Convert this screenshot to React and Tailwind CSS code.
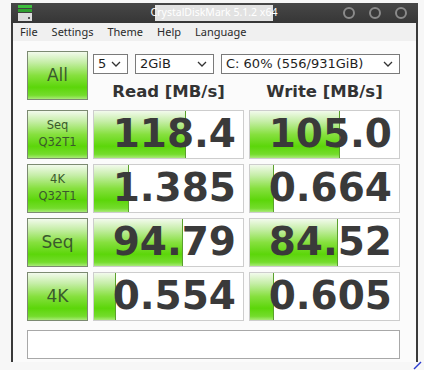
const rows = [
  { label: ["Seq", "Q32T1"], read: "118.4", readBar: 92, write: "105.0", writeBar: 90 },
  { label: ["4K", "Q32T1"], read: "1.385", readBar: 35, write: "0.664", writeBar: 24 },
  { label: ["Seq"], read: "94.79", readBar: 89, write: "84.52", writeBar: 88 },
  { label: ["4K"], read: "0.554", readBar: 22, write: "0.605", writeBar: 24 },
];

const green =
  "bg-[linear-gradient(to_bottom,#f2faec_0%,#c6eea8_22%,#86e03e_50%,#5cd60a_75%,#74dc2c_92%,#a8ea78_100%)]";

function Chevron() {
  return (
    <svg width="10" height="6" viewBox="0 0 10 6" className="shrink-0">
      <polyline points="1,1 5,5 9,1" fill="none" stroke="#333" strokeWidth="1.3" />
    </svg>
  );
}

function Select({ value, className }) {
  return (
    <div className={`h-[20px] border border-[#7a7a7a] bg-white flex items-center justify-between pl-[4px] pr-[6px] text-[13px] text-[#1e1e1e] ${className}`}>
      <span>{value}</span>
      <Chevron />
    </div>
  );
}

function TestButton({ lines, big }) {
  return (
    <div className={`h-[49px] border border-[#7c8a72] ${green} flex flex-col items-center justify-center text-[#3a5a2c] leading-[17px] ${big ? "text-[17px]" : "text-[11.5px]"}`}>
      {lines.map((l) => (
        <span key={l}>{l}</span>
      ))}
    </div>
  );
}

function Cell({ value, bar }) {
  return (
    <div className="relative h-[49px] border border-[#cdcdcd] bg-white overflow-hidden">
      <div className={`absolute left-0 top-0 bottom-0 ${green} border-r border-[#5aa02c]`} style={{ width: bar }} />
      <div className="relative h-full flex items-center justify-end pr-[7px] font-bold text-[39px] text-[#3a3a3a] tracking-[0px]" style={{ fontFamily: '"DejaVu Sans", sans-serif' }}>
        {value}
      </div>
    </div>
  );
}

export default function App() {
  return (
    <div className="w-[424px] h-[370px] bg-[#f7f7f7] pt-[3px] relative overflow-hidden" style={{ fontFamily: '"DejaVu Sans", Verdana, sans-serif' }}>
      <div className="ml-[11px] w-[407px] h-[359px] border-x-2 border-[#3a3a3a] flex flex-col bg-[#fbfbfb]">
        {/* title bar */}
        <div className="h-[20px] bg-[linear-gradient(to_bottom,#474747,#363636)] flex items-center relative -mx-[2px] px-[7px]">
          <svg width="14" height="16" viewBox="0 0 14 16">
            <rect x="0" y="0" width="14" height="3" fill="#3fbf3f" />
            <rect x="0" y="4" width="14" height="3" fill="#2f9f2f" />
            <rect x="0" y="8" width="14" height="8" fill="#dcdcdc" />
            <rect x="10" y="12" width="2" height="2" fill="#555" />
          </svg>
          <div className="absolute left-[144px] top-[2px] h-[16px] w-[118px] bg-[#e2e2e2] text-white text-[10.5px] flex items-center justify-center whitespace-nowrap" style={{ fontFamily: '"Noto Sans", sans-serif' }}>
            CrystalDiskMark 5.1.2 x64
          </div>
          <div className="ml-auto flex gap-[14px] mr-[4px]">
            {[0, 1, 2].map((i) => (
              <div key={i} className="w-[12px] h-[12px] rounded-full bg-[#3a3a3a] border-2 border-[#8a8a8a]" />
            ))}
          </div>
        </div>
        {/* menu bar */}
        <div className="h-[18px] bg-[#f0f0f0] flex items-center gap-[14px] pl-[7px] text-[11px] text-[#2a2a2a]" style={{ fontFamily: '"Noto Sans", sans-serif' }}>
          <span>File</span>
          <span>Settings</span>
          <span>Theme</span>
          <span>Help</span>
          <span>Language</span>
        </div>
        {/* body */}
        <div className="pl-[14px] pr-[15px] pt-[10px]">
          <div className="grid grid-cols-[61px_151px_151px] gap-x-[5px] gap-y-[5px]">
            <div className="mb-[1px]">
              <TestButton lines={["All"]} big />
            </div>
            <div className="col-span-2 flex flex-col">
              <div className="flex gap-[7px] mt-[3px]">
                <Select value="5" className="w-[35px]" />
                <Select value="2GiB" className="w-[79px]" />
                <Select value="C: 60% (556/931GiB)" className="w-[179px] ml-[0px]" />
              </div>
              <div className="grid grid-cols-2 gap-x-[5px] mt-[6px] font-bold text-[16.5px] text-[#333]">
                <div className="text-center">Read [MB/s]</div>
                <div className="text-center">Write [MB/s]</div>
              </div>
            </div>
            {rows.map((r) => (
              <div key={r.read} className="contents">
                <TestButton lines={r.label} big={r.label.length === 1} />
                <Cell value={r.read} bar={r.readBar} />
                <Cell value={r.write} bar={r.writeBar} />
              </div>
            ))}
          </div>
          <div className="mt-[9px] h-[29px] w-[373px] border border-[#a8a8a8] bg-white" />
        </div>
      </div>
      <svg className="absolute left-[413px] top-[360px]" width="10" height="10" viewBox="0 0 10 10">
        <line x1="1" y1="9" x2="8" y2="2" stroke="#2a3ad0" strokeWidth="1.5" />
      </svg>
    </div>
  );
}
